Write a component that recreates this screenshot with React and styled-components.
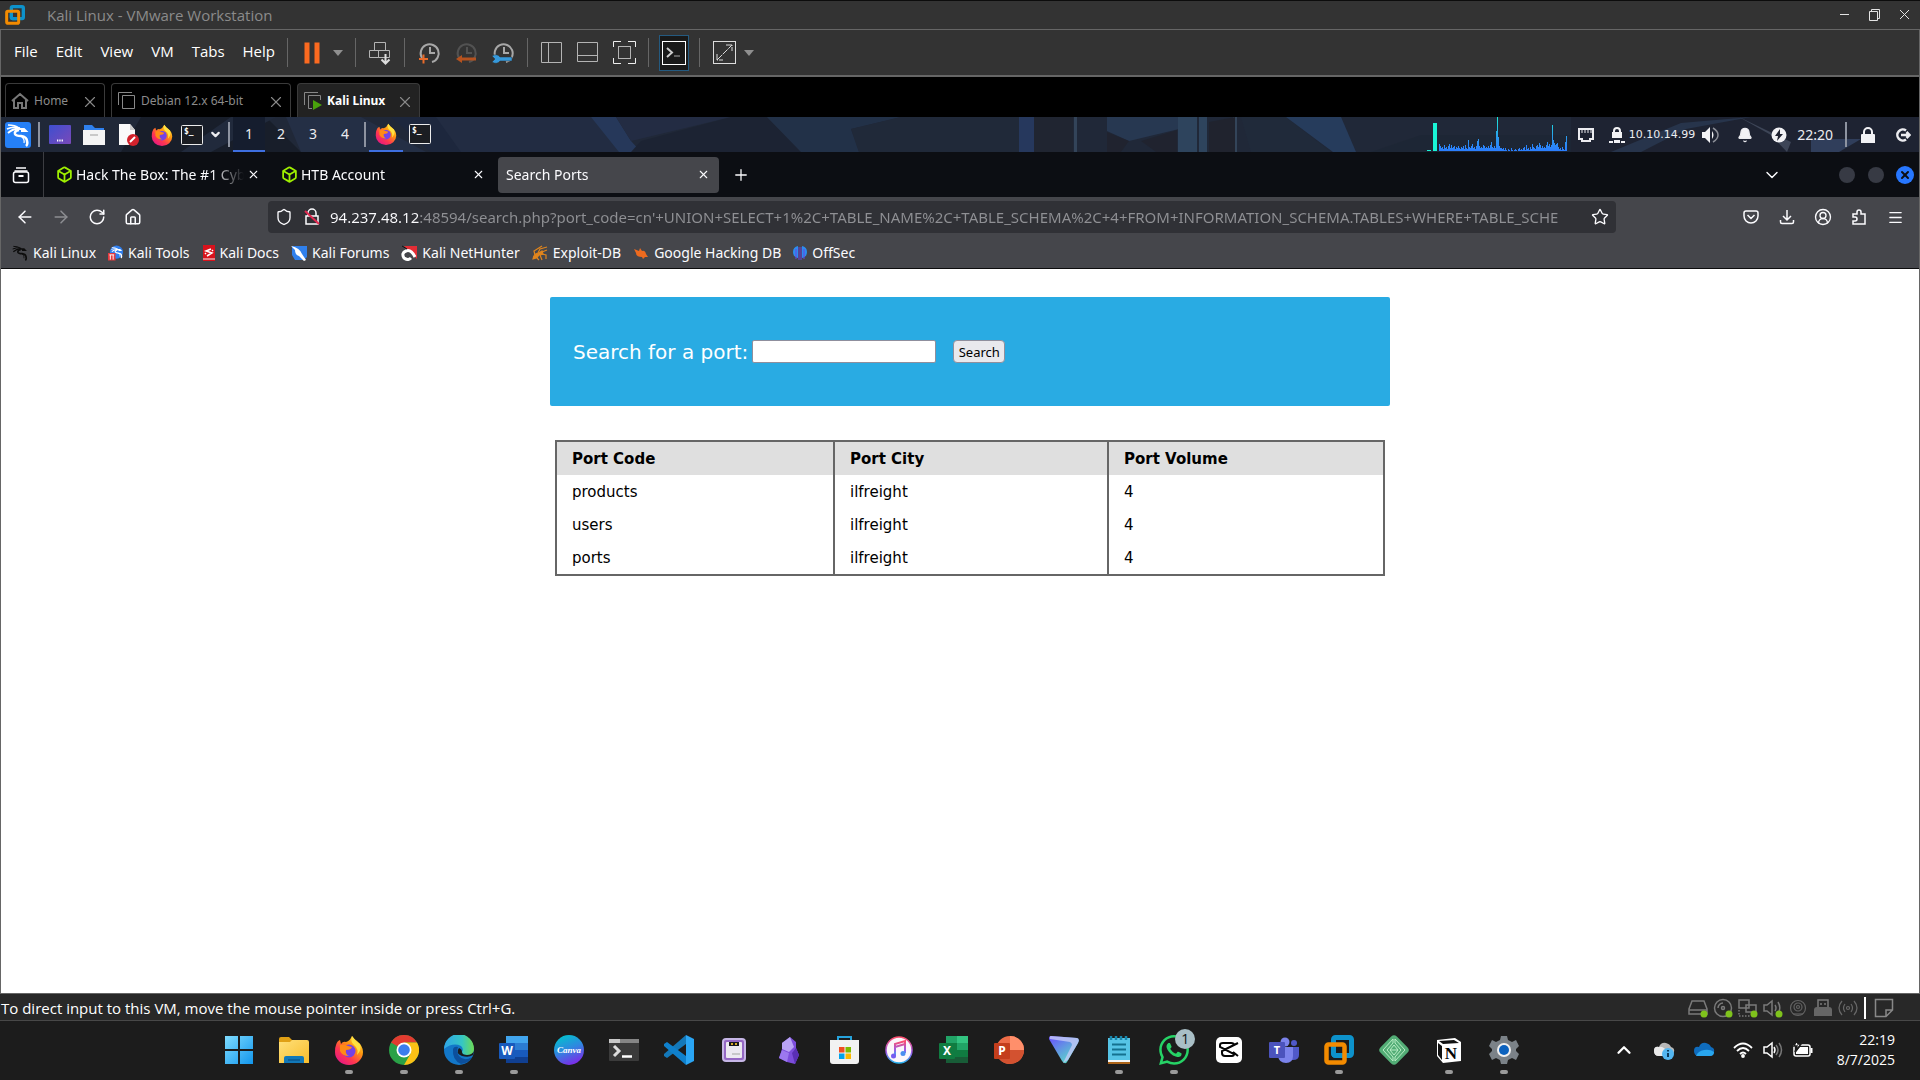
import { useState } from "react";
import styled, { createGlobalStyle } from "styled-components";
import {
  ArrowLeft,
  ArrowRight,
  Bell,
  Box,
  ChevronDown,
  ChevronUp,
  CircleUserRound,
  House,
  Menu,
  Plus,
  RotateCw,
  Shield,
  Star,
  X,
} from "lucide-react";
import { SiWhatsapp } from "react-icons/si";

const GlobalStyle = createGlobalStyle`
  * {
    box-sizing: border-box;
  }
  body {
    margin: 0;
    background: #1c1c1c;
    font-family: "Noto Sans", sans-serif;
  }
  button {
    padding: 0;
    border: 0;
    background: none;
    color: inherit;
    font: inherit;
  }
  svg {
    display: block;
    flex: none;
  }
`;

const Desktop = styled.div`
  display: flex;
  flex-direction: column;
  min-height: 100vh;
`;

/* VMware window */

const TitleBar = styled.header`
  display: flex;
  align-items: center;
  height: 30px;
  padding: 0 7px 0 5px;
  border-top: 1px solid #0c0c0c;
  border-bottom: 1px solid #666;
  background: #333;
  color: #8b8b8b;
  font: 15px/28px "Open Sans", sans-serif;
`;

const WindowTitle = styled.span`
  flex: 1;
  padding-left: 22px;
`;

const WindowButtons = styled.div`
  display: flex;
  gap: 14px;
  color: #e4e4e4;
`;

const VmFrame = styled.div`
  display: flex;
  flex: 1;
  flex-direction: column;
  border: 1px solid #666;
  border-width: 0 1px;
`;

const ToolBar = styled.nav`
  display: flex;
  align-items: center;
  height: 47px;
  padding-left: 13px;
  border-bottom: 2px solid #666;
  background: #333;
  color: #b4b4b4;
`;

const MenuBar = styled.div`
  display: flex;
  gap: 18px;
  margin-right: 12px;
  padding-bottom: 3px;
  color: #fff;
  font: 15px/20px "Open Sans", sans-serif;
`;

const ToolGroup = styled.div`
  display: flex;
  align-items: center;
  gap: ${(props) => props.$gap || 12}px;
  height: 29px;
  padding: 0 12px;
  border-left: 1px solid #666;
`;

const ConsoleButton = styled.button`
  display: grid;
  place-items: center;
  width: 30px;
  height: 36px;
  margin: 0 -2px;
  border: 1px solid #245a80;
  background: #191919;
  color: #fff;
`;

const VmTabs = styled.div`
  display: flex;
  align-items: flex-end;
  gap: 6px;
  height: 40px;
  padding-left: 4px;
  background: #000;
`;

const VmTab = styled.div`
  display: flex;
  align-items: center;
  width: ${(props) => props.$width}px;
  height: 34px;
  padding: 0 7px 0 5px;
  border: 1px solid #3a3a3a;
  border-bottom: 0;
  border-radius: 4px 4px 0 0;
  background: ${(props) => (props.$active ? "#222" : "#000")};
  color: ${(props) => (props.$active ? "#fff" : "#8b8b8b")};
  font-size: 12px;
  font-weight: ${(props) => (props.$active ? 700 : 400)};
`;

const VmTabLabel = styled.button`
  flex: 1;
  padding-left: 5px;
  text-align: left;
`;

const CloseButton = styled.button`
  display: grid;
  place-items: center;
  width: ${(props) => props.$size || 16}px;
  height: 16px;
  color: ${(props) => props.$color || "#8b8b8b"};
`;

/* Kali panel */

const Panel = styled.div`
  position: relative;
  display: flex;
  align-items: center;
  height: 35px;
  padding: 0 8px 0 4px;
  background: #202838;
  color: #ececf0;
  font-size: 14px;
`;

const Backdrop = styled.svg`
  position: absolute;
  inset: 0;
  width: 100%;
  height: 100%;
  opacity: 0.7;
`;

const PanelGroup = styled.div`
  position: relative;
  display: flex;
  align-items: center;
  height: 35px;
  gap: ${(props) => props.$gap || 0}px;
  margin-left: ${(props) => props.$left || 0}px;
`;

const PanelDivider = styled.span`
  width: 2px;
  height: 25px;
  background: #8d93a0;
`;

const Workspace = styled.button`
  width: 32px;
  height: 35px;
  border-bottom: 2px solid ${(props) => (props.$active ? "#3e6fe0" : "transparent")};
  background: ${(props) => (props.$active ? "#151d2e" : "transparent")};
`;

const PanelTask = styled.button`
  display: grid;
  place-items: center;
  width: 34px;
  height: 35px;
  border-bottom: 2px solid ${(props) => (props.$active ? "#3e6fe0" : "transparent")};
`;

const Tray = styled(PanelGroup)`
  flex: 1;
  justify-content: flex-end;
`;

const Address = styled.span`
  font: 11px/16px "DejaVu Sans", sans-serif;
`;

/* Firefox */

const TabStrip = styled.div`
  display: flex;
  align-items: center;
  height: 45px;
  padding-right: 5px;
  background: #0c0e13;
  color: #fbfbfe;
  font-size: 14px;
`;

const RecentButton = styled.button`
  display: grid;
  place-items: center;
  width: 43px;
  height: 45px;
  margin-right: 4px;
  padding-right: 2px;
  border-right: 1px solid #3c3d42;
`;

const BrowserTab = styled.div`
  display: flex;
  align-items: center;
  gap: 3px;
  width: 221px;
  height: 36px;
  margin-right: 4px;
  padding: 0 10px 0 8px;
  border-radius: 4px;
  background: ${(props) => (props.$active ? "#45464b" : "transparent")};
`;

const BrowserTabTitle = styled.button`
  flex: 1;
  min-width: 0;
  text-align: left;
  white-space: nowrap;
  mask-image: linear-gradient(90deg, #000 calc(100% - 32px), transparent);
`;

const Spacer = styled.span`
  flex: ${(props) => (props.$width ? `0 0 ${props.$width}px` : 1)};
`;

const WindowDot = styled.button`
  display: grid;
  place-items: center;
  width: ${(props) => (props.$close ? 18 : 16)}px;
  height: ${(props) => (props.$close ? 18 : 16)}px;
  margin-left: ${(props) => (props.$close ? 12 : 13)}px;
  border-radius: 50%;
  background: ${(props) => (props.$close ? "#2777ff" : "#373a44")};
  color: #0c0e13;
`;

const NavBar = styled.div`
  display: flex;
  align-items: center;
  height: 40px;
  padding: 0 6px;
  background: #45464b;
  color: #fbfbfe;
`;

const NavButton = styled.button`
  display: grid;
  place-items: center;
  width: 36px;
  height: 32px;
  color: ${(props) => (props.disabled ? "#8d8e92" : "inherit")};
`;

const UrlBar = styled.div`
  display: flex;
  flex: 1;
  align-items: center;
  height: 32px;
  margin: 0 117px;
  padding: 0 7px;
  border-radius: 4px;
  background: #303136;
`;

/* host part is bright, the rest of the address is dimmed and fades out */
const UrlInput = styled.input`
  flex: 1;
  min-width: 0;
  height: 28px;
  margin: 0 6px 0 9px;
  padding: 0;
  border: 0;
  outline: 0;
  background: linear-gradient(
    90deg,
    #fbfbfe 89px,
    #8f9094 89px,
    #8f9094 calc(100% - 30px),
    transparent
  );
  background-clip: text;
  -webkit-background-clip: text;
  color: transparent;
  font: 15px "Noto Sans", sans-serif;
`;

const Bookmarks = styled.div`
  display: flex;
  gap: 12px;
  height: 32px;
  padding: 0 11px;
  border-bottom: 1px solid #0c0c0d;
  background: #45464b;
`;

const Bookmark = styled.a`
  display: flex;
  align-items: center;
  gap: 5px;
  color: #fbfbfe;
  font-size: 14px;
  text-decoration: none;
  white-space: nowrap;
`;

/* Web page */

const Page = styled.main`
  display: flex;
  flex: 1;
  flex-direction: column;
  align-items: center;
  padding: 28px 0 0 20px;
  background: #fff;
  font-family: "DejaVu Sans", sans-serif;
`;

const SearchForm = styled.form`
  display: flex;
  align-items: center;
  width: 840px;
  max-width: 100%;
  height: 109px;
  padding-left: 23px;
  border-radius: 2px;
  background: #29abe3;
  color: #fff;
  font-size: 20px;
`;

const SearchInput = styled.input`
  width: 184px;
  height: 23px;
  margin: 0 17px 0 4px;
  border: 1px solid #8f8f9d;
  border-radius: 2px;
  background: #fff;
`;

const SearchButton = styled.button`
  width: 52px;
  height: 23px;
  border: 1px solid #8f8f9d;
  border-radius: 4px;
  background: #e9e9ed;
  color: #000;
  font: 13px/20px "Noto Sans", sans-serif;
`;

const PortTable = styled.table`
  width: 830px;
  max-width: 100%;
  margin-top: 34px;
  border: 2px solid #666;
  border-collapse: separate;
  border-spacing: 0;
  table-layout: fixed;
  color: #000;
  font-size: 15px;
`;

const Cell = styled.td`
  height: 33px;
  padding: 0 15px;
  border-left: ${(props) => (props.$first ? 0 : 2)}px solid #666;
  text-align: left;
`;

const HeadCell = styled(Cell)`
  width: ${(props) => props.$width};
  background: #dfdfdf;
`;

/* Host status bar and task bar */

const StatusBar = styled.footer`
  display: flex;
  align-items: center;
  gap: 5px;
  height: 28px;
  padding: 1px 26px 0 1px;
  border-top: 1px solid #666;
  border-bottom: 1px solid #484848;
  background: #282828;
  color: #7a7a7a;
`;

const StatusText = styled.span`
  flex: 1;
  color: #fff;
  font: 15px/20px "Open Sans", sans-serif;
`;

const StatusDivider = styled.span`
  width: 2px;
  height: 22px;
  margin: 0 3px 0 1px;
  background: #fff;
`;

const TaskBar = styled.footer`
  display: flex;
  align-items: center;
  height: 59px;
  padding: 0 25px 2px 11%;
  background: #1c1c1c;
  color: #fff;
`;

const TaskButton = styled.button`
  position: relative;
  display: grid;
  place-items: center;
  width: 55px;
  height: 57px;
  &::after {
    content: "";
    position: absolute;
    bottom: 4px;
    width: 8px;
    height: 4px;
    border-radius: 2px;
    background: ${(props) => (props.$running ? "#9a9a9a" : "transparent")};
  }
`;

const Badge = styled.span`
  position: absolute;
  top: 8px;
  right: 6px;
  width: 20px;
  height: 20px;
  border-radius: 50%;
  background: #a9bfc6;
  color: #111;
  font: 14px/20px "Open Sans", sans-serif;
`;

const SystemTray = styled.div`
  display: flex;
  align-items: center;
  gap: 10px;
  margin-left: auto;
`;

const Clock = styled.time`
  width: 72px;
  text-align: right;
  font: 14px/20px "Open Sans", sans-serif;
`;

const Line = ({ size = 24, box = 24, width = 1, children, ...rest }) => (
  <svg
    width={size}
    height={size}
    viewBox={`0 0 ${box} ${box}`}
    fill="none"
    stroke="currentColor"
    strokeWidth={width}
    {...rest}
  >
    {children}
  </svg>
);

const Art = ({ size = 30, children }) => (
  <svg width={size} height={size} viewBox="0 0 30 30">
    {children}
  </svg>
);

const Gradients = () => (
  <svg width="0" height="0" style={{ position: "absolute" }} aria-hidden="true">
    <defs>
      <linearGradient id="fox" x1="1" y1="0" x2="0.2" y2="1">
        <stop offset="0" stopColor="#fff44f" />
        <stop offset="0.4" stopColor="#ff980e" />
        <stop offset="0.7" stopColor="#ff3750" />
        <stop offset="1" stopColor="#e31587" />
      </linearGradient>
      <linearGradient id="win" x1="0" y1="0" x2="1" y2="1">
        <stop offset="0" stopColor="#7fdcff" />
        <stop offset="1" stopColor="#1296ec" />
      </linearGradient>
      <linearGradient id="folder" x1="0" y1="0" x2="1" y2="1">
        <stop offset="0" stopColor="#ffe07a" />
        <stop offset="1" stopColor="#f8bd2c" />
      </linearGradient>
      <linearGradient id="edge" x1="0" y1="0" x2="1" y2="0">
        <stop offset="0" stopColor="#2fa5e8" />
        <stop offset="0.6" stopColor="#35c6c4" />
        <stop offset="1" stopColor="#6edb52" />
      </linearGradient>
      <linearGradient id="canva" x1="0.2" y1="0" x2="0.6" y2="1">
        <stop offset="0" stopColor="#00c4cc" />
        <stop offset="0.5" stopColor="#2f87e0" />
        <stop offset="1" stopColor="#7d2ae8" />
      </linearGradient>
      <linearGradient id="itunes" x1="0" y1="0" x2="0" y2="1">
        <stop offset="0" stopColor="#ff4e6b" />
        <stop offset="0.6" stopColor="#9a5bea" />
        <stop offset="1" stopColor="#26b5f0" />
      </linearGradient>
      <linearGradient id="vpn" x1="0" y1="0" x2="0.8" y2="1">
        <stop offset="0" stopColor="#6a4cff" />
        <stop offset="1" stopColor="#5ae6c4" />
      </linearGradient>
      <linearGradient id="screen" x1="0" y1="0" x2="1" y2="1">
        <stop offset="0" stopColor="#3e4fd0" />
        <stop offset="1" stopColor="#7a49b8" />
      </linearGradient>
      <linearGradient id="spike" x1="0" y1="0" x2="0" y2="35" gradientUnits="userSpaceOnUse">
        <stop offset="0" stopColor="#19f0d8" />
        <stop offset="0.6" stopColor="#2b98ee" />
        <stop offset="1" stopColor="#2b7bff" />
      </linearGradient>
    </defs>
  </svg>
);

const VmwareLogo = ({ size }) => (
  <Art size={size}>
    <rect x="9.500" y="2.500" width="18" height="18" rx="2" fill="none" stroke="#0d92cb" strokeWidth="5" />
    <rect x="2.500" y="9.500" width="18" height="18" rx="2" fill="none" stroke="#f38b00" strokeWidth="4.500" />
    <path d="M9.500 13V18.500Q9.500 20.500 11.500 20.500H17" fill="none" stroke="#0d92cb" strokeWidth="4.500" />
  </Art>
);

const FirefoxLogo = ({ size }) => (
  <Art size={size}>
    <path
      d="M2 10Q3 6 6 5L7 9Q9 6 12 7Q16 6 18 1Q20 4 23 6Q29 11 29 17A14 13 0 0 1 1 17Q1 12 2 10Z"
      fill="url(#fox)"
    />
    <circle cx="15" cy="16" r="6.500" fill="#7542e5" />
    <path d="M6 10Q11 9 14 11L18 12Q17 15 12 15Q11 19 15 21Q8 21 6 16Z" fill="#ff8a16" />
    <path d="M18 1Q16 7 20 10Q25 14 23 20Q28 15 26 9Q21 6 18 1Z" fill="#ffe141" />
  </Art>
);

const KaliDragon = ({ x = 0, y = 0, size = 16, color = "#fff" }) => (
  <svg x={x} y={y} width={size} height={size} viewBox="0 0 24 24" fill="none" stroke={color}>
    <path d="M2 2Q9 2 13 5M1 6Q7 3 14 5" strokeWidth="1.500" />
    <path d="M2 10Q8 5 14 6L18 6L20 8L15 8" strokeWidth="2" />
    <path d="M13 7Q8 8 9 11Q10 13 15 13Q21 14 21 18Q22 21 20 23" strokeWidth="2.500" />
    <path d="M15 13Q19 16 18 20" strokeWidth="1.200" />
  </svg>
);

const TerminalIcon = () => (
  <svg width="22" height="20" viewBox="0 0 22 20">
    <rect x="0.500" y="0.500" width="21" height="19" rx="1" fill="#1b1d22" stroke="#ececec" />
    <text x="3" y="9" fill="#fff" fontSize="8" fontWeight="700" fontFamily="DejaVu Sans Mono, monospace">
      $_
    </text>
  </svg>
);

const CLOCK_ARC = "M5 17A9 9 0 1 1 15 21M13 6V12H18";

const SnapshotIcon = ({ kind }) => (
  <Line width={2} stroke={kind === "revert" ? "#525252" : "#a8a8a8"}>
    <path d={CLOCK_ARC} />
    {kind === "take" && <path d="M2 18H11M6.500 13.500V22.500" stroke="#e86b2b" />}
    {kind === "revert" && (
      <path d="M2 18L8 14V16.500H22V19.500H8V22Z" fill="#b5521f" stroke="none" />
    )}
    {kind === "manage" && (
      <path
        d="M1 15L4 18L1 21Q6 24 9 20H21V16H9Q6 12 1 15Z"
        fill="#3699db"
        stroke="#333"
        strokeWidth="0.500"
      />
    )}
  </Line>
);

const Caret = () => (
  <svg width="10" height="6" viewBox="0 0 10 6" fill="#8f8f8f">
    <path d="M0 0H10L5 6Z" />
  </svg>
);

const MENUS = ["File", "Edit", "View", "VM", "Tabs", "Help"];

const VmToolBar = () => (
  <ToolBar>
    <MenuBar>
      {MENUS.map((menu) => (
        <button key={menu}>{menu}</button>
      ))}
    </MenuBar>
    <ToolGroup $gap={9}>
      <button aria-label="Suspend">
        <Line>
          <path d="M7 1.500V22.500M17 1.500V22.500" stroke="#fb6a20" strokeWidth="5" />
        </Line>
      </button>
      <Caret />
    </ToolGroup>
    <ToolGroup>
      <button aria-label="Send Ctrl+Alt+Del">
        <Line>
          <path d="M6.500 1.500H17.500V9.500H6.500ZM1.500 9.500H10.500V16.500H1.500ZM10.500 9.500H21.500V16.500H10.500Z" />
          <path d="M17.500 13V22M13.500 18.500L17.500 22.500L21.500 18.500" stroke="#ddd" strokeWidth="2" />
        </Line>
      </button>
    </ToolGroup>
    <ToolGroup $gap={13}>
      {["take", "revert", "manage"].map((kind) => (
        <button key={kind} aria-label={`${kind} snapshot`}>
          <SnapshotIcon kind={kind} />
        </button>
      ))}
    </ToolGroup>
    <ToolGroup>
      <button aria-label="Library">
        <Line>
          <path d="M1.500 1.500H21.500V21.500H1.500ZM8.500 1.500V21.500" />
        </Line>
      </button>
      <button aria-label="Thumbnails">
        <Line>
          <path d="M1.500 1.500H21.500V20.500H1.500ZM1.500 14.500H21.500" />
        </Line>
      </button>
      <button aria-label="Full screen">
        <Line>
          <rect x="6.500" y="5.500" width="12" height="12" />
          <path
            d="M1.500 6V0.500H9M16 0.500H23.500V6M23.500 17V22.500H16M9 22.500H1.500V17"
            stroke="#eee"
          />
        </Line>
      </button>
    </ToolGroup>
    <ToolGroup>
      <ConsoleButton aria-label="Console view">
        <Line>
          <rect x="0.500" y="0.500" width="23" height="23" />
          <path d="M5 7L10 11.500L5 16" stroke="#ccc" strokeWidth="2" />
          <path d="M12 15H18" stroke="#aaa" />
        </Line>
      </ConsoleButton>
    </ToolGroup>
    <ToolGroup $gap={8}>
      <button aria-label="Stretch guest">
        <Line stroke="#ddd">
          <rect x="1.500" y="0.500" width="22" height="22" />
          <path d="M5 19L20 4M14 4H20V10M5 13V19H11" strokeDasharray="7 1" />
        </Line>
      </button>
      <Caret />
    </ToolGroup>
  </ToolBar>
);

const VmTabBar = () => (
  <VmTabs>
    <VmTab $width={100}>
      <Line size={18} box={18} width={2} stroke="#777">
        <path d="M1 9L9 2L17 9M3 8V16H7V11H11V16H15V8" />
      </Line>
      <VmTabLabel>Home</VmTabLabel>
      <CloseButton aria-label="Close Home">
        <X size={18} strokeWidth={1.500} />
      </CloseButton>
    </VmTab>
    <VmTab $width={180}>
      <Line size={19} box={19} stroke="#888">
        <path d="M1.500 14V1.500H15M5.500 4.500H17.500V17.500H5.500Z" />
      </Line>
      <VmTabLabel>Debian 12.x 64-bit</VmTabLabel>
      <CloseButton aria-label="Close Debian">
        <X size={18} strokeWidth={1.500} />
      </CloseButton>
    </VmTab>
    <VmTab $width={123} $active>
      <Line size={19} box={19} stroke="#888">
        <path d="M1.500 14V1.500H15M9 17.500H5.500V4.500H17.500V9" />
        <path d="M10 9L19 14L10 19Z" fill="#49a10c" stroke="none" />
      </Line>
      <VmTabLabel>Kali Linux</VmTabLabel>
      <CloseButton aria-label="Close Kali Linux">
        <X size={18} strokeWidth={1.500} />
      </CloseButton>
    </VmTab>
  </VmTabs>
);

const WORKSPACES = [1, 2, 3, 4];
const LOAD = [
  7, 5, 3, 4, 2, 6, 3, 4, 2, 5, 7, 3, 6, 3, 4, 5, 2, 4, 3, 5, 3, 2, 4, 3, 5, 2, 6, 3, 2, 11, 4, 3,
  5, 7, 3, 4, 2, 5, 10, 12, 5, 3, 4, 3, 6, 5, 3, 4, 3, 5, 3, 6, 9, 4, 3, 5, 3, 20, 35, 14, 5, 3,
  3, 2, 3, 1, 3, 1, 0, 2, 1, 0, 3, 1, 0, 1, 2, 1, 0, 2, 3, 1, 2, 1, 3, 4, 1, 6, 2, 3, 1, 4, 2, 7,
  4, 3, 2, 5, 6, 4, 8, 6, 3, 5, 3, 4, 3, 6, 9, 5, 7, 4, 6, 26, 11, 8, 6, 7, 8, 4, 2, 3, 1, 4, 2, 1,
  9, 15,
];

const PanelBackdrop = () => (
  <Backdrop viewBox="0 0 1918 35" preserveAspectRatio="none" aria-hidden="true">
    <path d="M120 35L140 0H265L300 35Z" fill="#151a25" />
    <path d="M180 35L230 0H275L210 35Z" fill="#222c3e" />
    <path d="M285 0H360L425 35H300Z" fill="#27324b" />
    <path d="M390 0H440L462 35H430Z" fill="#1d2740" />
    <path d="M435 0H590L625 35H460Z" fill="#232f47" />
    <path d="M590 0H615L630 24L640 35H618Z" fill="#294069" />
    <path d="M615 0H730L630 24Z" fill="#252e48" />
    <path d="M640 24L730 0H766L800 35H630Z" fill="#1b2231" />
    <path d="M766 0H900L850 12L858 35H800Z" fill="#24354f" />
    <path d="M850 12L900 0H1018V35H858Z" fill="#212a3a" />
    <path d="M1018 0H1033V35H1018Z" fill="#293f6e" />
    <path d="M1033 0H1072V35H1033Z" fill="#20242f" />
    <path d="M1073 0H1076V35H1073ZM1232 0H1236V35H1232Z" fill="#3c5068" />
    <path d="M1106 0H1178V12L1128 24L1106 14Z" fill="#2b3f5c" />
    <path d="M1106 15L1128 24L1120 35H1106ZM1140 24L1176 13V35H1155Z" fill="#20222c" />
    <path d="M1177 0H1196V35H1177ZM1198 0H1206V35H1198Z" fill="#34506d" />
    <path d="M1208 5L1234 0V35H1208Z" fill="#20222b" />
    <path d="M1240 0H1285L1330 35H1250Z" fill="#202b3c" />
    <path d="M1285 0H1340L1355 35H1332Z" fill="#29456c" />
    <path d="M1370 35L1420 18H1918V35Z" fill="#1d2634" />
    <path d="M1570 0H1918V35H1570Z" fill="#1e2230" />
    <path d="M1610 35L1680 6L1750 0L1685 12L1640 35Z" fill="#2a3a54" />
    <path d="M1738 0L1790 25L1786 35L1770 18Z" fill="#4a5265" />
    <path d="M1810 35V22H1860L1838 35Z" fill="#37486a" />
  </Backdrop>
);

const KaliPanel = () => (
  <Panel>
    <PanelBackdrop />
    <PanelGroup $gap={7}>
      <svg width="26" height="26" viewBox="0 0 26 26">
        <rect width="26" height="26" rx="3" fill="#2580f7" />
        <KaliDragon x={1} y={1} size={24} />
      </svg>
      <PanelDivider />
    </PanelGroup>
    <PanelGroup $gap={12} $left={9}>
      <svg width="22" height="19" viewBox="0 0 22 19">
        <rect width="22" height="19" rx="1" fill="url(#screen)" />
        <path d="M8 15.500H14" stroke="#fff" strokeWidth="2" strokeDasharray="1.300 1" />
      </svg>
      <svg width="22" height="20" viewBox="0 0 22 20">
        <path d="M1 0H9L12 3H21V9H1Z" fill="#2f80ed" />
        <path d="M0 5H22V20H0Z" fill="#f4f4f4" />
        <path d="M7 10H15" stroke="#bbb" strokeWidth="1.500" />
      </svg>
      <svg width="22" height="22" viewBox="0 0 22 22">
        <path d="M2 0H13L18 6V21H2Z" fill="#fafafa" />
        <path d="M13 0V6H18Z" fill="#ccc" />
        <circle cx="16" cy="16" r="6" fill="#d3222c" />
        <path d="M13 18L18 13" stroke="#fff" strokeWidth="2" />
      </svg>
      <FirefoxLogo size={22} />
    </PanelGroup>
    <PanelGroup $gap={6} $left={8}>
      <TerminalIcon />
      <ChevronDown size={13} strokeWidth={4} />
      <PanelDivider />
    </PanelGroup>
    <PanelGroup $left={3}>
      {WORKSPACES.map((n) => (
        <Workspace key={n} $active={n === 1}>
          {n}
        </Workspace>
      ))}
    </PanelGroup>
    <PanelGroup $left={3}>
      <PanelDivider />
    </PanelGroup>
    <PanelGroup $left={3}>
      <PanelTask $active aria-label="Firefox">
        <FirefoxLogo size={22} />
      </PanelTask>
      <PanelTask aria-label="Terminal">
        <TerminalIcon />
      </PanelTask>
    </PanelGroup>
    <Tray>
      <svg width="140" height="35" viewBox="0 0 140 35" fill="url(#spike)">
        <path d="M0 33H4V34H0ZM6 6H10V34H6Z" fill="#19f5d6" />
        {LOAD.map((value, i) => (
          <rect key={i} x={12 + i} y={34 - value} width="1" height={value} />
        ))}
      </svg>
      <PanelGroup $gap={15} $left={11}>
        <Line size={16} box={16} width={2}>
          <path d="M1 2H15V12H12V14H4V12H1Z" />
          <path d="M4 2V6M7 2V6M10 2V6M13 2V6" strokeWidth="1" />
        </Line>
        <svg width="16" height="16" viewBox="0 0 16 16" fill="#f2f2f5">
          <path d="M3 5H4V4A4 4 0 0 1 12 4V5H13V11H3ZM6 5H10V4A2 2 0 0 0 6 4Z" />
          <path d="M0 14H4V16H0ZM5 13H11V16H5ZM12 14H16V16H12Z" />
        </svg>
      </PanelGroup>
      <PanelGroup $left={4}>
        <Address>10.10.14.99</Address>
      </PanelGroup>
      <PanelGroup $gap={18} $left={7}>
        <svg width="17" height="16" viewBox="0 0 17 16" fill="#f2f2f5">
          <path d="M0 5H3L8 0V16L3 11H0ZM10 4Q13 8 10 12Z" />
          <path d="M11 1Q16 4 16 8T11 15" fill="none" stroke="#8b8e97" strokeWidth="1.500" />
        </svg>
        <Bell size={16} fill="#f2f2f5" />
        <svg width="16" height="16" viewBox="0 0 16 16">
          <circle cx="8" cy="8" r="7.500" fill="#f2f2f5" />
          <path d="M9 2L4 9H7L6 14L12 7H9Z" fill="#1e2230" />
        </svg>
      </PanelGroup>
      <PanelGroup $gap={12} $left={10}>
        <time>22:20</time>
        <PanelDivider />
      </PanelGroup>
      <PanelGroup $gap={20} $left={14}>
        <svg width="14" height="16" viewBox="0 0 14 16" fill="#f2f2f5">
          <path d="M1 7H2V5A5 5 0 0 1 12 5V7H13Q14 7 14 8V16H0V8Q0 7 1 7ZM4 7H10V5A3 3 0 0 0 4 5Z" />
        </svg>
        <Line size={16} box={16} width={2.500}>
          <path d="M11 3.500A5.500 5.500 0 1 0 11 12.500M6 8H14M11.500 5L14.500 8L11.500 11" />
        </Line>
      </PanelGroup>
    </Tray>
  </Panel>
);

const BROWSER_TABS = [
  { title: "Hack The Box: The #1 Cyb", icon: true },
  { title: "HTB Account", icon: true },
  { title: "Search Ports" },
];

const BrowserTabs = () => {
  const [active, setActive] = useState(2);
  return (
    <TabStrip>
      <RecentButton aria-label="Recent browsing">
        <Line size={18} box={18} width={1.500}>
          <path d="M4 2H14M2.500 5H15.500" />
          <rect x="1.500" y="6" width="15" height="10.500" rx="2" />
          <path d="M6.500 10H11.500" strokeWidth="2" />
        </Line>
      </RecentButton>
      {BROWSER_TABS.map((tab, i) => (
        <BrowserTab key={tab.title} $active={i === active}>
          {tab.icon && <Box size={17} color="#9fef00" strokeWidth={2.500} />}
          <BrowserTabTitle onClick={() => setActive(i)}>{tab.title}</BrowserTabTitle>
          <CloseButton $size={12} $color="#fbfbfe" aria-label={`Close ${tab.title}`}>
            <X size={13} strokeWidth={2} />
          </CloseButton>
        </BrowserTab>
      ))}
      <NavButton aria-label="New tab">
        <Plus size={18} strokeWidth={1.700} />
      </NavButton>
      <Spacer />
      <NavButton aria-label="List all tabs">
        <ChevronDown size={20} strokeWidth={1.700} />
      </NavButton>
      <Spacer $width={36} />
      <WindowDot aria-label="Minimize" />
      <WindowDot aria-label="Maximize" />
      <WindowDot $close aria-label="Close">
        <X size={12} strokeWidth={4} />
      </WindowDot>
    </TabStrip>
  );
};

const URL_TEXT =
  "94.237.48.12:48594/search.php?port_code=cn'+UNION+SELECT+1%2C+TABLE_NAME%2C+TABLE_SCHEMA%2C+4+FROM+INFORMATION_SCHEMA.TABLES+WHERE+TABLE_SCHE";

const BrowserNav = () => (
  <NavBar>
    <NavButton aria-label="Back">
      <ArrowLeft size={20} strokeWidth={1.800} />
    </NavButton>
    <NavButton aria-label="Forward" disabled>
      <ArrowRight size={20} strokeWidth={1.800} />
    </NavButton>
    <NavButton aria-label="Reload">
      <RotateCw size={18} strokeWidth={2} />
    </NavButton>
    <NavButton aria-label="Home">
      <House size={18} strokeWidth={2} />
    </NavButton>
    <UrlBar>
      <Shield size={18} strokeWidth={1.800} />
      <Line size={18} box={18} width={1.500} style={{ marginLeft: 10 }}>
        <path d="M5 8V5A4 4 0 0 1 13 5V8M3 8H15V16H3Z" />
        <path d="M2 3L16 16" stroke="#e22850" strokeWidth="2" />
      </Line>
      <UrlInput aria-label="Address" defaultValue={URL_TEXT} spellCheck={false} />
      <Star size={18} strokeWidth={1.800} />
    </UrlBar>
    <NavButton aria-label="Pocket">
      <Line size={16} box={16} width={1.500}>
        <path d="M3 2H13Q15 2 15 4V7A7 7 0 0 1 1 7V4Q1 2 3 2ZM4.500 6L8 9.500L11.500 6" />
      </Line>
    </NavButton>
    <NavButton aria-label="Downloads">
      <Line size={16} box={16} width={1.500}>
        <path d="M8 1V11M4 7L8 11L12 7M1.500 11V13Q1.500 14.500 3 14.500H13Q14.500 14.500 14.500 13V11" />
      </Line>
    </NavButton>
    <NavButton aria-label="Account">
      <CircleUserRound size={18} strokeWidth={1.800} />
    </NavButton>
    <NavButton aria-label="Extensions">
      <Line size={16} box={16} width={1.500}>
        <path d="M2 5H6V3A2 2 0 0 1 10 3V5H14V15H2V12H4A2 2 0 0 0 4 8H2Z" />
      </Line>
    </NavButton>
    <NavButton aria-label="Menu">
      <Menu size={17} strokeWidth={1.800} />
    </NavButton>
  </NavBar>
);

const BOOKMARKS = [
  { label: "Kali Linux", icon: <KaliDragon color="#0c0c0c" /> },
  {
    label: "Kali Tools",
    icon: (
      <svg width="15" height="16" viewBox="0 0 16 16">
        <circle cx="9" cy="7" r="7" fill="#2f7ff0" />
        <KaliDragon x={3} y={1} size={13} />
        <path d="M0 8H8V16H0Z" fill="#e33a3f" />
        <path d="M2.500 10V15M5.500 10V15M1.500 10H6.500" stroke="#fff" />
      </svg>
    ),
  },
  {
    label: "Kali Docs",
    icon: (
      <svg width="13" height="16" viewBox="0 0 13 16">
        <path d="M1 0H13V16H1Z" fill="#d8121c" />
        <path d="M1 14H13" stroke="#eee" />
        <path d="M9 4L4 6L10 8L5 11M3 8L4 9M10 5L11 6" fill="none" stroke="#fff" strokeWidth="1.500" />
      </svg>
    ),
  },
  {
    label: "Kali Forums",
    icon: (
      <svg width="16" height="16" viewBox="0 0 16 16">
        <path d="M1 1H16V12L13 15H4L1 10Z" fill="#2f80ed" />
        <path d="M0 1Q9 3 11 9L15 15L13 16L8 11Q4 10 4 5Z" fill="#fff" />
      </svg>
    ),
  },
  {
    label: "Kali NetHunter",
    icon: (
      <svg width="16" height="16" viewBox="0 0 16 16">
        <path d="M3 1H16V14Z" fill="#e32d35" />
        <path d="M14 12Q10 4 5 6T3 13Q7 16 10 13" fill="none" stroke="#fff" strokeWidth="3" />
        <path d="M1 1L6 4" stroke="#111" />
      </svg>
    ),
  },
  {
    label: "Exploit-DB",
    icon: (
      <Line size={16} box={16} width={1.200} stroke="#e0851d">
        <path d="M1 14Q2 8 7 8Q7 13 1 14ZM7 8L10 6L11 9L8 10Z" fill="#e0851d" />
        <path d="M3 10L2 6L10 1M6 8L8 4L15 2M10 7L15 5M10 9L14 10L14 14M8 10L10 15M4 12L7 15" />
      </Line>
    ),
  },
  {
    label: "Google Hacking DB",
    icon: (
      <svg width="16" height="16" viewBox="0 0 16 16">
        <path d="M1 4L6 6L7 3L9 6Q12 5 13 9L15 12L12 12L10 14L9 12Q3 12 3 8Z" fill="#ee6a1e" />
      </svg>
    ),
  },
  {
    label: "OffSec",
    icon: (
      <svg width="14" height="16" viewBox="0 0 14 16">
        <path d="M5 1V13Q0 12 0 7T5 1ZM9 1V13Q14 12 14 7T9 1Z" fill="#2c8df0" />
        <path d="M3 4V14M6 2V15M8 2V15M11 4V14" stroke="#6943df" />
      </svg>
    ),
  },
];

const ROWS = [
  ["products", "ilfreight", "4"],
  ["users", "ilfreight", "4"],
  ["ports", "ilfreight", "4"],
];

const PortsPage = () => {
  const [query, setQuery] = useState("");
  return (
    <Page>
      <SearchForm onSubmit={(e) => e.preventDefault()}>
        <label htmlFor="port">Search for a port:</label>
        <SearchInput id="port" value={query} onChange={(e) => setQuery(e.target.value)} />
        <SearchButton>Search</SearchButton>
      </SearchForm>
      <PortTable>
        <thead>
          <tr>
            <HeadCell as="th" $first $width="276px">
              Port Code
            </HeadCell>
            <HeadCell as="th" $width="274px">
              Port City
            </HeadCell>
            <HeadCell as="th">Port Volume</HeadCell>
          </tr>
        </thead>
        <tbody>
          {ROWS.map((row) => (
            <tr key={row[0]}>
              {row.map((value, i) => (
                <Cell key={i} $first={i === 0}>
                  {value}
                </Cell>
              ))}
            </tr>
          ))}
        </tbody>
      </PortTable>
    </Page>
  );
};

const GreenDot = () => <circle cx="16" cy="16" r="3.500" fill="#7fc31c" stroke="none" />;

const VmStatusBar = () => (
  <StatusBar>
    <StatusText>To direct input to this VM, move the mouse pointer inside or press Ctrl+G.</StatusText>
    <Line size={20} box={20} width={1.500}>
      <path d="M1 16V11L4 3H16L19 11V16ZM1 12H19" />
      <GreenDot />
    </Line>
    <Line size={20} box={20} width={1.500}>
      <circle cx="10" cy="10" r="8.500" />
      <circle cx="10" cy="10" r="1.500" />
      <path d="M5 10A5 5 0 0 1 10 5" />
      <GreenDot />
    </Line>
    <Line size={20} box={20} width={1.500}>
      <path d="M1 2H11V10H1ZM8 7H18V14H8Z" fill="#282828" />
      <path d="M1 12V18H13" strokeDasharray="1.500 1.500" />
      <GreenDot />
    </Line>
    <Line size={20} box={20} width={1.500}>
      <path d="M1 7H4L9 3V17L4 13H1ZM12 7Q14 10 12 13M15 4Q18 9 16 13" />
      <GreenDot />
    </Line>
    <Line size={20} box={20} width={1.200} stroke="#626262">
      <circle cx="10" cy="10" r="7.500" />
      <circle cx="10" cy="9" r="4" />
      <circle cx="10" cy="9" r="1.500" />
      <path d="M5 16H15" />
    </Line>
    <Line size={20} box={20} width={1.500}>
      <path d="M5 10V2H15V10M8 5V7M12 5V7" />
      <path d="M1 18V12Q1 9 4 9H16Q19 9 19 12V18Z" fill="#666" stroke="none" />
    </Line>
    <Line size={20} box={20} width={1.200} stroke="#686868">
      <circle cx="10" cy="10" r="1.500" />
      <path d="M7 6Q4 10 7 14M13 6Q16 10 13 14M4 3Q-2 10 4 17M16 3Q22 10 16 17" />
    </Line>
    <StatusDivider />
    <Line size={20} box={20} width={1.500} stroke="#888">
      <path d="M1.500 1.500H18.500V12L12 18.500H1.500ZM18.500 12H12V18.500" />
    </Line>
  </StatusBar>
);

const OfficeLogo = ({ letter, dark, children }) => (
  <Art>
    {children}
    <rect x="0" y="8" width="16" height="16" rx="1" fill={dark} />
    <text x="8" y="20" fill="#fff" fontSize="12" fontWeight="700" textAnchor="middle">
      {letter}
    </text>
  </Art>
);

const APPS = [
  {
    name: "Start",
    icon: (
      <Art>
        <path d="M1 1H14V14H1ZM16 1H29V14H16ZM1 16H14V29H1ZM16 16H29V29H16Z" fill="url(#win)" />
      </Art>
    ),
  },
  {
    name: "File Explorer",
    icon: (
      <Art>
        <path d="M0 4Q0 2 2 2H10L13 5V10H0Z" fill="#e0a015" />
        <path d="M0 7H11L13 5H28Q30 5 30 7V28H0Z" fill="url(#folder)" />
        <path d="M5 28V23Q5 21 7 21H23Q25 21 25 23V28Z" fill="#1278b8" />
        <path d="M9 25H21" stroke="#0b578f" strokeWidth="1.500" />
      </Art>
    ),
  },
  { name: "Firefox", running: true, icon: <FirefoxLogo size={30} /> },
  {
    name: "Chrome",
    running: true,
    icon: (
      <Art>
        <circle cx="15" cy="15" r="15" fill="#2aa147" />
        <path d="M15 15L2 7.500A15 15 0 0 1 28 7.500H15Z" fill="#e23b30" />
        <path d="M15 7.500H28A15 15 0 0 1 15 30L21.500 18.800Z" fill="#fbc116" />
        <circle cx="15" cy="15" r="7.500" fill="#fff" />
        <circle cx="15" cy="15" r="5.800" fill="#3b7ded" />
      </Art>
    ),
  },
  {
    name: "Edge",
    running: true,
    icon: (
      <Art>
        <circle cx="15" cy="15" r="15" fill="#1377c8" />
        <path
          d="M0 14A15 15 0 0 1 30 14Q30 20 23 20Q18 20 18 17Q20 14 17 11Q9 7 0 14Z"
          fill="url(#edge)"
        />
        <path d="M9 14Q8 25 17 29Q25 28 28 22Q20 27 15 21Q12 17 14 12Q10 11 9 14Z" fill="#0c4f9c" />
        <path d="M15 13Q11 18 18 21Q25 23 29 20L30 16Q28 20 23 20Q18 20 18 17Q18 14 15 13Z" fill="#1c1c1c" />
      </Art>
    ),
  },
  {
    name: "Word",
    running: true,
    icon: (
      <OfficeLogo letter="W" dark="#185abd">
        <path d="M7 1H29V8H7Z" fill="#41a5ee" />
        <path d="M7 8H29V15H7Z" fill="#2b7cd3" />
        <path d="M7 15H29V22H7Z" fill="#185abd" />
        <path d="M7 22H29V28H7Z" fill="#103f91" />
      </OfficeLogo>
    ),
  },
  {
    name: "Canva",
    icon: (
      <Art>
        <circle cx="15" cy="15" r="15" fill="url(#canva)" />
        <text
          x="15"
          y="18"
          fill="#fff"
          fontSize="9"
          fontStyle="italic"
          fontWeight="700"
          fontFamily="Liberation Serif, serif"
          textAnchor="middle"
        >
          Canva
        </text>
      </Art>
    ),
  },
  {
    name: "Terminal",
    icon: (
      <Art>
        <rect x="0" y="4" width="30" height="22" rx="1" fill="#3b3b3b" />
        <path d="M0 4H11V8H0Z" fill="#c8c8c8" />
        <path d="M11 4H30V8H11Z" fill="#858585" />
        <path d="M5 11L10 16L5 21" fill="none" stroke="#ddd" strokeWidth="3" />
        <path d="M13 21.500H23" stroke="#fff" strokeWidth="2.500" />
      </Art>
    ),
  },
  {
    name: "Visual Studio Code",
    icon: (
      <Art>
        <path d="M22 9L3 23L0 21V19L22 0Z" fill="#1478b8" />
        <path d="M22 21L3 7L0 9V11L22 30Z" fill="#0f80cc" />
        <path d="M22 0L30 4V26L22 30Z" fill="#2aa5f3" />
      </Art>
    ),
  },
  {
    name: "Backup",
    icon: (
      <Art>
        <rect x="3" y="3" width="24" height="24" rx="4" fill="#c6b6e6" />
        <rect x="5" y="5" width="20" height="20" rx="2" fill="#9568c4" />
        <rect x="7" y="7" width="16" height="16" rx="1" fill="#ece9f1" />
        <path d="M10 7H20V11H10Z" fill="#15151a" />
        <path d="M12 9H14M16 9H18" stroke="#d7a928" strokeWidth="2" />
        <path d="M13 19H21" stroke="#bbb" strokeWidth="1.500" />
      </Art>
    ),
  },
  {
    name: "Obsidian",
    icon: (
      <Art>
        <path d="M16 2L22 7V13L25 20L21 29L13 27L5 23L8 14V8Z" fill="#7c4ddb" />
        <path d="M16 2L8 8V14L15 17L20 12Z" fill="#b9a3f5" />
        <path d="M8 15L5 23L13 27L15 18Z" fill="#9c78ef" />
        <path d="M22 13L25 20L21 29L18 18Z" fill="#5a2fb5" />
      </Art>
    ),
  },
  {
    name: "Microsoft Store",
    icon: (
      <Art>
        <path d="M9 6V2H22V6" fill="none" stroke="#26a3dc" strokeWidth="2" />
        <path d="M1 5H30V26Q30 29 27 29H4Q1 29 1 26Z" fill="#f2f2f2" />
        <path d="M10 12H15.500V17.500H10Z" fill="#f04e23" />
        <path d="M16.500 12H22V17.500H16.500Z" fill="#7dba00" />
        <path d="M10 18.500H15.500V24H10Z" fill="#02a2e8" />
        <path d="M16.500 18.500H22V24H16.500Z" fill="#fbb800" />
      </Art>
    ),
  },
  {
    name: "iTunes",
    icon: (
      <Art>
        <circle cx="15" cy="15" r="13" fill="#fbf7fb" stroke="url(#itunes)" strokeWidth="1.500" />
        <path d="M11 21V9L21 6V18M11 12L21 9" fill="none" stroke="url(#itunes)" strokeWidth="2" />
        <circle cx="9.500" cy="21" r="2.500" fill="#745cf0" />
        <circle cx="19" cy="18.500" r="2.500" fill="#4a8ff0" />
      </Art>
    ),
  },
  {
    name: "Excel",
    icon: (
      <OfficeLogo letter="X" dark="#107c41">
        <path d="M7 1H18V8H7Z" fill="#21a366" />
        <path d="M18 1H29V8H18Z" fill="#33c481" />
        <path d="M7 8H18V22H7Z" fill="#107c41" />
        <path d="M18 8H29V15H18Z" fill="#21a366" />
        <path d="M18 15H29V22H18Z" fill="#107c41" />
        <path d="M7 22H29V28H7Z" fill="#185c37" />
      </OfficeLogo>
    ),
  },
  {
    name: "PowerPoint",
    icon: (
      <OfficeLogo letter="P" dark="#c43e1c">
        <circle cx="16" cy="15" r="14" fill="#ed6c47" />
        <path d="M16 1A14 14 0 0 1 30 15H16Z" fill="#ff8f6b" />
        <path d="M2 15H30A14 14 0 0 1 2 15Z" fill="#d35230" />
      </OfficeLogo>
    ),
  },
  {
    name: "Proton VPN",
    icon: (
      <Art>
        <path d="M2 1L28 3Q31 4 29 8L18 27Q16 30 13 26L0 4Q0 1 2 1Z" fill="url(#vpn)" />
        <path d="M2 1L28 3Q31 4 29 8L19 25L14 28L23 10Q23 8 21 7L1 4Q0 1 2 1Z" fill="#c4c9f6" opacity="0.800" />
      </Art>
    ),
  },
  {
    name: "Notepad",
    running: true,
    icon: (
      <Art>
        <path d="M4 3H26V27H4Z" fill="#56c4e6" />
        <path d="M4 25H26V27H4Z" fill="#f6f6f6" />
        <path d="M4 27H26V29H4Z" fill="#ac6418" />
        <path d="M7 1V5M12 1V5M17 1V5M22 1V5" stroke="#1787ad" strokeWidth="2.500" />
        <path d="M8 9.500H22M8 14.500H22M8 19.500H22" stroke="#14718f" strokeWidth="2" />
      </Art>
    ),
  },
  { name: "WhatsApp", running: true, badge: 1, icon: <SiWhatsapp size={30} color="#26d366" /> },
  {
    name: "CapCut",
    icon: (
      <Art>
        <rect x="2" y="2" width="26" height="26" rx="5" fill="#fff" />
        <path
          d="M24 8L8 16V18Q8 21 11 21H18Q20 21 20 19L6 12V10Q6 8 9 8H17Q20 8 20 10L8 16M19 17L24 21"
          fill="none"
          stroke="#050505"
          strokeWidth="2"
        />
      </Art>
    ),
  },
  {
    name: "Teams",
    icon: (
      <Art>
        <circle cx="25" cy="8" r="3" fill="#5059c9" />
        <path d="M20 12H30V20Q30 25 24 25H20Z" fill="#5059c9" />
        <circle cx="16" cy="7" r="4.500" fill="#7b83eb" />
        <path d="M9 12H24V21Q24 28 17 28T9 21Z" fill="#7b83eb" />
        <rect x="0" y="7" width="16" height="16" rx="1" fill="#4b53bc" />
        <text x="8" y="19" fill="#fff" fontSize="11" fontWeight="700" textAnchor="middle">
          T
        </text>
      </Art>
    ),
  },
  { name: "VMware Workstation", running: true, icon: <VmwareLogo size={30} /> },
  {
    name: "Mind map",
    icon: (
      <Art>
        <rect x="3.500" y="3.500" width="23" height="23" rx="4" fill="#53ad76" transform="rotate(45 15 15)" />
        <path
          d="M14 4L4 15L14 26V22L8 15L14 8ZM16 4L26 15L16 26V22L22 15L16 8ZM15 10L11 15L15 20L19 15ZM11 15H19"
          fill="none"
          stroke="#b9edc5"
        />
      </Art>
    ),
  },
  {
    name: "Notion",
    running: true,
    icon: (
      <Art>
        <path d="M3 5L21 3L27 7V26L9 28L3 21Z" fill="#fff" />
        <path d="M5 6L20 5L25 8L9 9ZM4 8L8 11V25L4 20Z" fill="#111" />
        <text
          x="17"
          y="24"
          fill="#050505"
          fontSize="17"
          fontWeight="700"
          fontFamily="Liberation Serif, serif"
          textAnchor="middle"
        >
          N
        </text>
      </Art>
    ),
  },
  {
    name: "Settings",
    running: true,
    icon: (
      <Art>
        <path
          d="M12 1H18L19 5L23 7L27 5L30 11L27 14V16L30 19L27 25L23 23L19 25L18 29H12L11 25L7 23L3 25L0 19L3 16V14L0 11L3 5L7 7L11 5Z"
          fill="#7b8288"
        />
        <circle cx="15" cy="15" r="7" fill="#f1f1f1" />
        <circle cx="15" cy="15" r="5" fill="#0c62be" />
      </Art>
    ),
  },
];

const CLOUD = "M5 16Q0 16 0 11T5 7Q7 2 12 3Q16 4 17 7Q21 8 20 12T16 16Z";

const HostTaskBar = () => (
  <TaskBar>
    {APPS.map((app) => (
      <TaskButton key={app.name} $running={app.running} aria-label={app.name}>
        {app.icon}
        {app.badge && <Badge>{app.badge}</Badge>}
      </TaskButton>
    ))}
    <SystemTray>
      <ChevronUp size={22} strokeWidth={2.500} />
      <svg width="30" height="20" viewBox="0 0 30 20">
        <g transform="translate(9 0)">
          <path d={CLOUD} fill="#b7b7b7" />
          <path d="M5 7Q10 5 16 16H5Q0 16 0 11T5 7Z" fill="#e9e9e9" />
          <circle cx="14" cy="14" r="6" fill="#53b6f1" />
          <path d="M14 13V17M14 10V11.500" stroke="#0b3a5c" strokeWidth="2" />
        </g>
      </svg>
      <svg width="30" height="20" viewBox="0 0 30 20">
        <g transform="translate(9 0)">
          <path d={CLOUD} fill="#0f6cbd" />
          <path d="M2 16Q4 11 10 10T20 12Q20 16 16 16Z" fill="#29a6ee" />
        </g>
      </svg>
      <Line size={20} box={20} width={1.800} style={{ marginLeft: 8 }}>
        <path d="M1 8Q10 -1 19 8M4 11Q10 5 16 11M7 14Q10 11 13 14" />
        <circle cx="10" cy="16" r="1" fill="currentColor" />
      </Line>
      <Line size={20} box={20} width={1.500}>
        <path d="M1 7H4L9 3V17L4 13H1ZM11 7Q13 10 11 13" />
        <path d="M13 5Q17 10 13 15M16 3Q21 10 16 17" stroke="#777" />
      </Line>
      <Line size={20} box={20} width={1.500}>
        <rect x="1" y="5" width="16" height="11" rx="2" />
        <path d="M18.500 8V13" strokeWidth="2" />
        <path d="M7 7H15V14H3V12Z" fill="currentColor" stroke="none" />
        <path d="M4 0L1 6H4L2 12L8 4H5Z" fill="#fff" stroke="#1c1c1c" />
      </Line>
      <Clock>
        22:19
        <br />
        8/7/2025
      </Clock>
    </SystemTray>
  </TaskBar>
);

const App = () => (
  <Desktop>
    <GlobalStyle />
    <Gradients />
    <TitleBar>
      <VmwareLogo size={20} />
      <WindowTitle>Kali Linux - VMware Workstation</WindowTitle>
      <WindowButtons>
        <button aria-label="Minimize">
          <Line size={16} box={16}>
            <path d="M3 7.500H12" />
          </Line>
        </button>
        <button aria-label="Restore">
          <Line size={16} box={16}>
            <path d="M2.500 4.500H10.500V13.500H2.500ZM4.500 4.500V2.500H12.500V11.500H10.500" />
          </Line>
        </button>
        <button aria-label="Close">
          <Line size={16} box={16}>
            <path d="M3 3L12 12M12 3L3 12" />
          </Line>
        </button>
      </WindowButtons>
    </TitleBar>
    <VmFrame>
      <VmToolBar />
      <VmTabBar />
      <KaliPanel />
      <BrowserTabs />
      <BrowserNav />
      <Bookmarks>
        {BOOKMARKS.map((item) => (
          <Bookmark key={item.label} href="#">
            {item.icon}
            {item.label}
          </Bookmark>
        ))}
      </Bookmarks>
      <PortsPage />
    </VmFrame>
    <VmStatusBar />
    <HostTaskBar />
  </Desktop>
);

export default App;
